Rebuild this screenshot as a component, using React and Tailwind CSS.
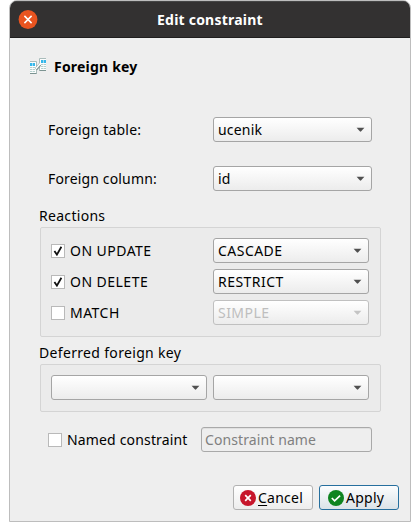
function Arrow({ disabled }) {
  return (
    <svg width="9" height="6" viewBox="0 0 9 6" className={disabled ? "text-[#c4c4c4]" : "text-[#505050]"}>
      <path d="M0.6 0.8H8.4L5.2 4.3Q4.5 5 3.8 4.3Z" fill="currentColor" />
    </svg>
  );
}

function Combo({ children, disabled, className = "w-[156px]" }) {
  return (
    <div
      className={`flex h-[25px] shrink-0 items-center justify-between rounded-[3px] border bg-linear-to-b from-white to-[#ececec] pr-[6px] pl-[4px] ${
        disabled ? "border-[#c0c0c0] text-[#bebebe]" : "border-[#a5a5a5]"
      } ${className}`}
    >
      <span>{children}</span>
      <Arrow disabled={disabled} />
    </div>
  );
}

function Check({ checked }) {
  return (
    <div className="flex size-[14px] shrink-0 items-center justify-center border border-[#b9b9b9] bg-white">
      {checked && (
        <svg width="10" height="10" viewBox="0 0 10 10" fill="none" stroke="#111" strokeWidth="1.8">
          <path d="M1.4 5 3.9 8.6 8.4 0.8" />
        </svg>
      )}
    </div>
  );
}

function Reaction({ checked, label, value, disabled }) {
  return (
    <div className="flex h-[25px] items-center tracking-[0.47px]">
      <Check checked={checked} />
      <div className="w-[148px] pl-[5px]">{label}</div>
      <Combo disabled={disabled}>{value}</Combo>
    </div>
  );
}

function KeyIcon() {
  return (
    <svg width="17" height="17" viewBox="0 0 17 17">
      <path d="M0 3.5H6.5V15.5H0" fill="#fbfdfd" stroke="#a9bcbb" />
      <path d="M0 15.5H6.5" stroke="#7c9492" />
      <rect x="0" y="5" width="5" height="3" fill="#35b7ea" />
      <path d="M0 9.5H5M0 11.5H5M0 13.5H5" stroke="#b4cfcd" />
      <path d="M2.5 5V14" stroke="#ffffff" strokeOpacity="0.5" />
      <path d="M16 0.5H9.5V12.5H16" fill="#fbfdfd" stroke="#a9bcbb" />
      <path d="M9.5 12.5H16" stroke="#7c9492" />
      <rect x="11" y="2" width="5" height="3" fill="#35b7ea" />
      <path d="M11 6.5H16M11 8.5H16M11 10.5H16" stroke="#b4cfcd" />
      <path d="M13.5 2V11" stroke="#ffffff" strokeOpacity="0.5" />
      <path d="M6 11.2 10 6.6" stroke="#7c9492" strokeWidth="3" />
      <path d="M5.8 10.8 10.2 5.8" stroke="#ffffff" strokeWidth="1.6" />
    </svg>
  );
}

export default function App() {
  return (
    <div className="h-[531px] w-[420px] overflow-hidden bg-white pl-[9px] font-['Noto_Sans',sans-serif] text-[14px] leading-[20px] whitespace-nowrap text-black">
      <div className="flex h-[522px] w-[402px] flex-col overflow-hidden rounded-t-[8px] border border-[#bdbdbd] bg-[#eeeeee]">
        <div className="flex h-[37px] shrink-0 items-center border-t border-b border-t-[#454545] border-b-[#1f1e1e] bg-[#333131] pl-[8px]">
          <svg width="20" height="20" viewBox="0 0 20 20">
            <circle cx="10" cy="9.5" r="9.4" fill="#e95420" />
            <path d="m6.4 5.9 7.2 7.2m0-7.2-7.2 7.2" stroke="white" strokeWidth="1.5" />
          </svg>
          <div className="ml-[119px] font-bold tracking-[0.22px] text-white">Edit constraint</div>
        </div>

        <div className="mt-[20px] ml-[20px] flex h-[17px] items-center">
          <KeyIcon />
          <span className="ml-[7px] font-bold tracking-[0.2px]">Foreign key</span>
        </div>

        <div className="mt-[42px] ml-[38px] flex items-center tracking-[0.2px]">
          <div className="w-[165px]">Foreign table:</div>
          <Combo className="w-[159px]">ucenik</Combo>
        </div>
        <div className="mt-[24px] ml-[38px] flex items-center tracking-[0.15px]">
          <div className="w-[165px]">Foreign column:</div>
          <Combo className="w-[159px]">id</Combo>
        </div>

        <div className="mt-[15px] ml-[29px] h-[21px] tracking-[0.3px]">Reactions</div>
        <div className="ml-[30px] flex h-[110px] w-[341px] shrink-0 flex-col gap-[6px] rounded-[2px] border border-[#d4d4d4] bg-[#ebebeb] pt-[10px] pl-[10px]">
          <Reaction checked label="ON UPDATE" value="CASCADE" />
          <Reaction checked label="ON DELETE" value="RESTRICT" />
          <Reaction label="MATCH" value="SIMPLE" disabled />
        </div>

        <div className="mt-[6px] ml-[29px] h-[21px] tracking-[0.33px]">Deferred foreign key</div>
        <div className="ml-[30px] flex h-[48px] w-[341px] shrink-0 gap-[6px] rounded-[2px] border border-[#d4d4d4] bg-[#ebebeb] pt-[10px] pl-[10px]">
          <Combo />
          <Combo />
        </div>

        <div className="mt-[15px] ml-[38px] flex h-[25px] items-center tracking-[0.16px]">
          <Check />
          <div className="w-[139px] pl-[5px]">Named constraint</div>
          <div className="flex h-[25px] w-[171px] items-center rounded-[3px] border border-[#a9a9a9] pl-[3px] tracking-[0.1px] text-[#808080] shadow-[inset_0_1px_0_#e0e0e0]">Constraint name</div>
        </div>

        <div className="mt-[33px] flex justify-end gap-[6px] pr-[11px] tracking-[0.25px]">
          <div className="flex h-[25px] w-[80px] items-center rounded-[3px] border border-[#b2b2b2] bg-linear-to-b from-white to-[#ededed] pl-[6px]">
            <svg width="16" height="16" viewBox="0 0 16 16">
              <circle cx="8" cy="8" r="8" fill="#c7162b" />
              <path d="m5.2 5.2 5.6 5.6m0-5.6-5.6 5.6" stroke="white" strokeWidth="1.7" />
            </svg>
            <span className="ml-[2px]"><span className="underline decoration-1 underline-offset-[2px]">C</span>ancel</span>
          </div>
          <div className="flex h-[25px] w-[80px] items-center rounded-[3px] border border-[#266f9e] bg-linear-to-b from-[#fcfdfe] to-[#dbe3e8] pl-[8px]">
            <svg width="16" height="16" viewBox="0 0 16 16">
              <circle cx="8" cy="8" r="8" fill="#0e8420" />
              <path d="m3.8 8 2.8 2.8 5.5-5.2" fill="none" stroke="white" strokeWidth="1.7" />
            </svg>
            <span className="ml-[2px]">Apply</span>
          </div>
        </div>
      </div>
    </div>
  );
}
